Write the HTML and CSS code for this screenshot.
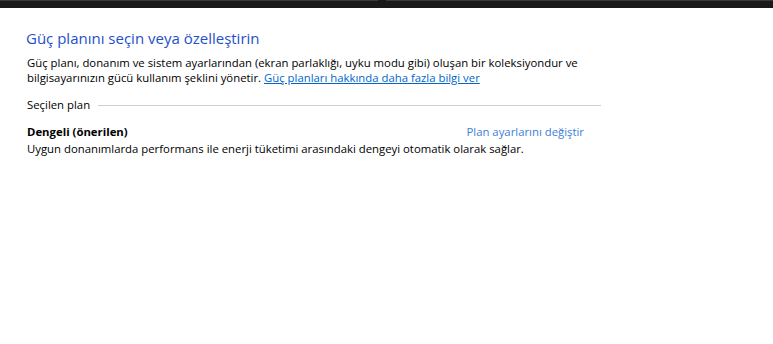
FILE: index.html
```html
<!DOCTYPE html>
<html lang="tr">
<head>
    <meta charset="UTF-8">
    <title>Güç Seçenekleri</title>
    <link rel="stylesheet" href="styles.css">
</head>
<body>
    <div class="topbar"><span class="notch"></span></div>
    <div class="content">
        <h1>Güç planını seçin veya özelleştirin</h1>
        <p class="intro">Güç planı, donanım ve sistem ayarlarından (ekran parlaklığı, uyku modu gibi) oluşan bir koleksiyondur ve bilgisayarınızın gücü kullanım şeklini yönetir. <a href="#" class="link">Güç planları hakkında daha fazla bilgi ver</a></p>

        <div class="section">
            <span class="section-title">Seçilen plan</span>
            <span class="rule"></span>
        </div>

        <div class="plan">
            <div class="plan-row">
                <span class="plan-name">Dengeli (önerilen)</span>
                <a href="#" class="plan-link">Plan ayarlarını değiştir</a>
            </div>
            <div class="plan-desc">Uygun donanımlarda performans ile enerji tüketimi arasındaki dengeyi otomatik olarak sağlar.</div>
        </div>
    </div>
</body>
</html>
```

FILE: styles.css
```css
body {
    margin: 0;
    background: #fff;
    font-family: 'Open Sans', 'Noto Sans', sans-serif;
    font-size: 11.35px;
    color: #000;
}
.topbar {
    height: 7px;
    background: #1a1a1a;
    border-top: 1px solid #3a3a3a;
    position: relative;
}
.notch {
    position: absolute;
    top: -1px;
    left: 378px;
    width: 8px;
    height: 1px;
    background: #1a1a1a;
}
.content {
    padding: 20px 0 0 27px;
    width: 574px;
}
h1 {
    margin: 0 0 7px -1px;
    font-size: 15px;
    font-weight: normal;
    color: #1e50c8;
    line-height: 20px;
}
.intro {
    margin: 0;
    line-height: 15px;
}
.link {
    color: #0066cc;
}
.section {
    display: flex;
    align-items: center;
    margin-top: 12px;
    line-height: 16px;
}
.section-title {
    margin-right: 8px;
}
.rule {
    flex: 1;
    border-top: 1px solid #cfcfcf;
}
.plan {
    margin-top: 10px;
    width: 557px;
}
.plan-row {
    display: flex;
    justify-content: space-between;
    line-height: 17px;
}
.plan-name {
    font-weight: bold;
}
.plan-link {
    color: #3a80d8;
    text-decoration: none;
}
.plan-desc {
    line-height: 18px;
}
```
